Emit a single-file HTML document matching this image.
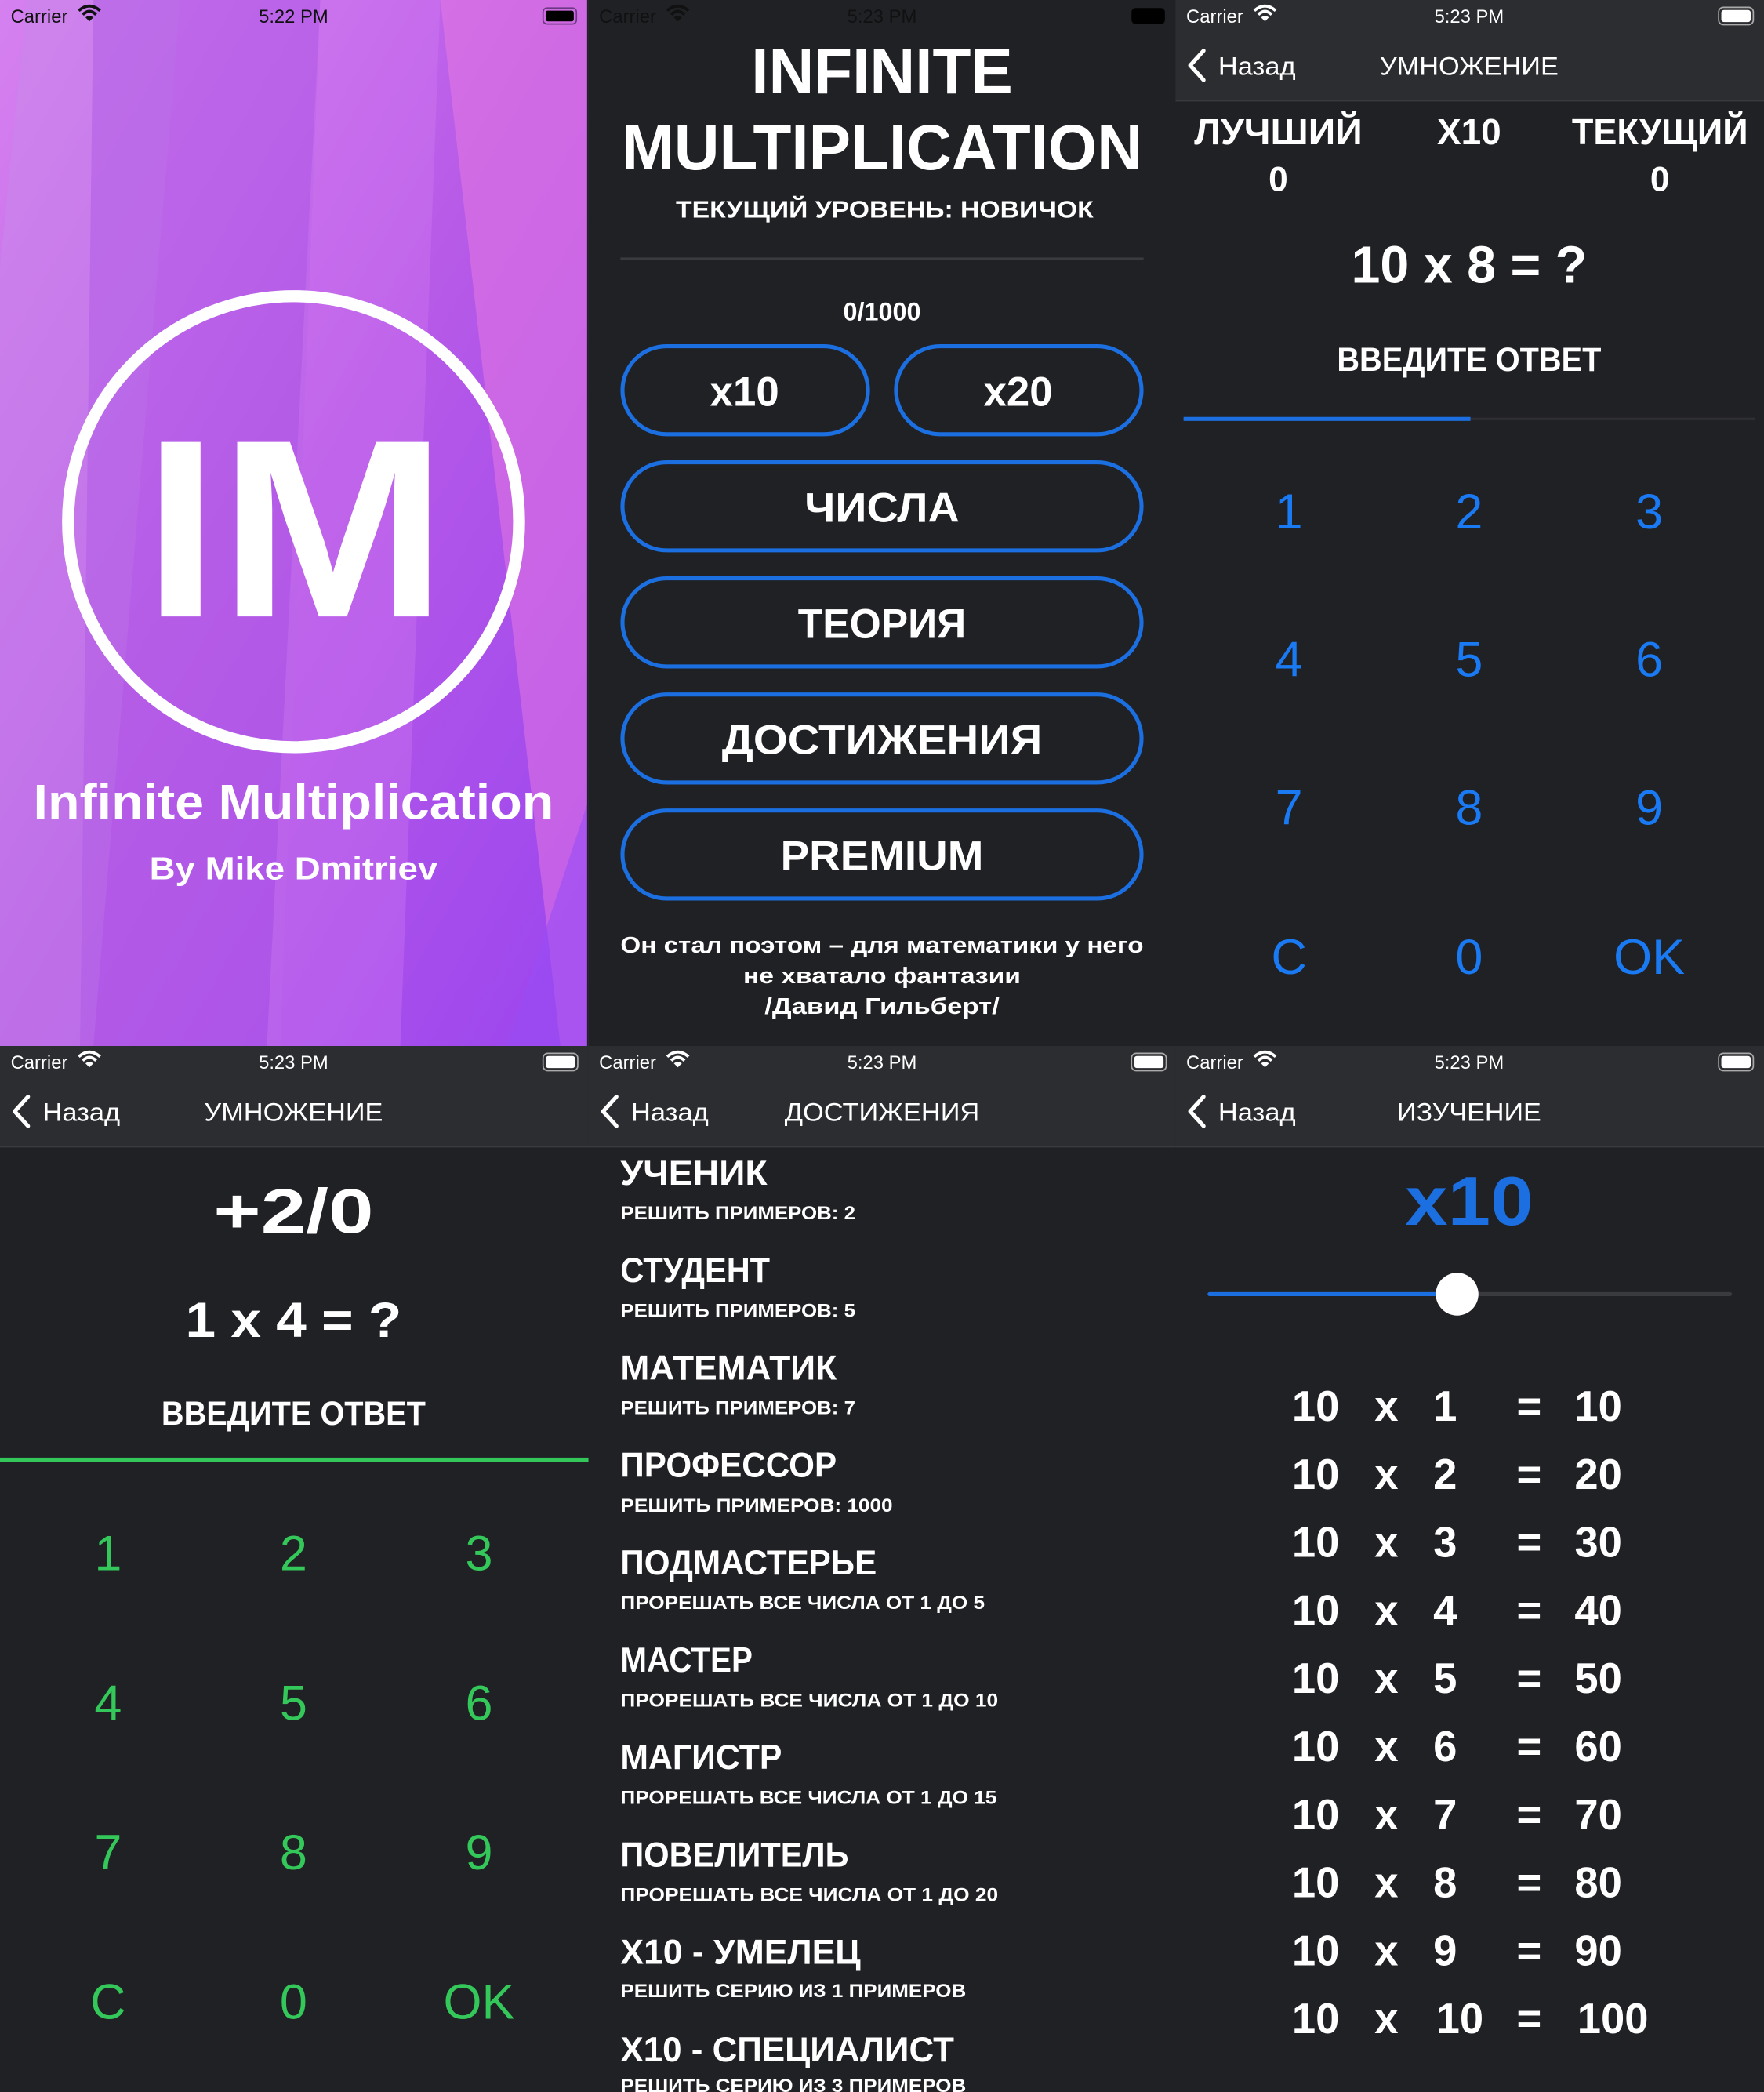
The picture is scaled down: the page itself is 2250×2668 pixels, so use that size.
<!DOCTYPE html>
<html><head><meta charset="utf-8"><style>html,body{margin:0;padding:0;background:#202125;overflow:hidden}svg{display:block}text{font-family:"Liberation Sans",sans-serif}</style></head><body>
<svg width="2250" height="2668" viewBox="0 0 1322 1568" preserveAspectRatio="none" xmlns="http://www.w3.org/2000/svg">
<defs>
<linearGradient id="g1" x1="0" y1="0" x2="1" y2="1"><stop offset="0" stop-color="#d681f0"/><stop offset="0.5" stop-color="#b75ae8"/><stop offset="1" stop-color="#9b45ee"/></linearGradient>
<g id="wifi"><path d="M0 -4 Q8 -11 16 -4" stroke="currentColor" stroke-width="2.2" fill="none"/><path d="M3 -1 Q8 -6 13 -1" stroke="currentColor" stroke-width="2.2" fill="none"/><path d="M8 4 L5 1 Q8 -1 11 1 Z" fill="currentColor"/></g>
<g id="back"><path d="M12 -11 L2 0 L12 11" stroke="#fff" stroke-width="3" fill="none" stroke-linecap="round" stroke-linejoin="round"/></g>
</defs>
<rect width="1322" height="1568" fill="#202125"/>
<!-- Panel 1 -->
<rect x="0" y="0" width="441" height="784" fill="url(#g1)"/>
<polygon points="20,0 135,0 70,784 0,784 0,200" fill="#c88ae8" opacity="0.45"/>
<polygon points="70,0 240,0 210,784 60,784" fill="#b05ae6" opacity="0.5"/>
<polygon points="330,0 441,0 441,784 420,784" fill="#f07ee0" opacity="0.45"/>
<polygon points="240,0 330,0 300,784 200,784" fill="#d880f2" opacity="0.3"/>
<polygon points="441,600 441,784 380,784" fill="#9a4cf5" opacity="0.6"/>
<text x="8" y="17" font-size="14" fill="#111">Carrier</text><use href="#wifi" x="59" y="12" style="color:#111"/>
<text x="220" y="17" font-size="14" fill="#111" text-anchor="middle">5:22 PM</text>
<rect x="407" y="6" width="25" height="12" rx="3" fill="none" stroke="#6a3a80" stroke-width="1"/><rect x="409" y="8" width="21" height="8" rx="1.5" fill="#000"/>
<circle cx="220" cy="391" r="169" fill="none" stroke="#fff" stroke-width="9"/>
<text x="221" y="462" font-size="190" font-weight="bold" fill="#fff" text-anchor="middle" textLength="228" lengthAdjust="spacingAndGlyphs">IM</text>
<text x="220" y="614" font-size="37" font-weight="bold" fill="#fff" text-anchor="middle" textLength="390" lengthAdjust="spacingAndGlyphs">Infinite Multiplication</text>
<text x="220" y="659" font-size="24" font-weight="bold" fill="#fff" text-anchor="middle" textLength="216" lengthAdjust="spacingAndGlyphs">By Mike Dmitriev</text>
<!-- Panel 2 -->
<text x="449" y="17" font-size="14" fill="#111">Carrier</text><use href="#wifi" x="500" y="12" style="color:#111"/>
<text x="661" y="17" font-size="14" fill="#111" text-anchor="middle">5:23 PM</text>
<rect x="848" y="6" width="25" height="12" rx="3" fill="#000"/>
<text x="661" y="70" font-size="48" font-weight="bold" fill="#fff" text-anchor="middle" textLength="196" lengthAdjust="spacingAndGlyphs">INFINITE</text>
<text x="661" y="127" font-size="48" font-weight="bold" fill="#fff" text-anchor="middle" textLength="390" lengthAdjust="spacingAndGlyphs">MULTIPLICATION</text>
<text x="663" y="163" font-size="18" font-weight="bold" fill="#fff" text-anchor="middle" textLength="313" lengthAdjust="spacingAndGlyphs">ТЕКУЩИЙ УРОВЕНЬ: НОВИЧОК</text>
<rect x="465" y="193" width="392" height="2" fill="#3a3b3f"/>
<text x="661" y="240" font-size="19" font-weight="bold" fill="#fff" text-anchor="middle">0/1000</text>
<g fill="none" stroke="#1b6fe0" stroke-width="3">
<rect x="466.5" y="259.5" width="184" height="66" rx="33"/><rect x="671.5" y="259.5" width="184" height="66" rx="33"/>
<rect x="466.5" y="346.5" width="389" height="66" rx="33"/><rect x="466.5" y="433.5" width="389" height="66" rx="33"/>
<rect x="466.5" y="520.5" width="389" height="66" rx="33"/><rect x="466.5" y="607.5" width="389" height="66" rx="33"/>
</g>
<g font-size="31" font-weight="bold" fill="#fff" text-anchor="middle">
<text x="558" y="304">x10</text><text x="763" y="304">x20</text>
<text x="661" y="391" textLength="116" lengthAdjust="spacingAndGlyphs">ЧИСЛА</text>
<text x="661" y="478" textLength="126" lengthAdjust="spacingAndGlyphs">ТЕОРИЯ</text>
<text x="661" y="565" textLength="240" lengthAdjust="spacingAndGlyphs">ДОСТИЖЕНИЯ</text>
<text x="661" y="652" textLength="152" lengthAdjust="spacingAndGlyphs">PREMIUM</text>
</g>
<g font-size="17" font-weight="bold" fill="#fff" text-anchor="middle">
<text x="661" y="714" textLength="392" lengthAdjust="spacingAndGlyphs">Он стал поэтом – для математики у него</text>
<text x="661" y="737" textLength="208" lengthAdjust="spacingAndGlyphs">не хватало фантазии</text>
<text x="661" y="760" textLength="176" lengthAdjust="spacingAndGlyphs">/Давид Гильберт/</text>
</g>
<!-- nav bars -->
<rect x="881" y="0" width="441" height="76" fill="#2c2d30"/><rect x="881" y="75" width="441" height="1" fill="#3a3b3e"/>
<rect x="0" y="784" width="441" height="76" fill="#2c2d30"/><rect x="0" y="859" width="441" height="1" fill="#3a3b3e"/>
<rect x="441" y="784" width="440" height="76" fill="#2c2d30"/><rect x="441" y="859" width="440" height="1" fill="#3a3b3e"/>
<rect x="881" y="784" width="441" height="76" fill="#2c2d30"/><rect x="881" y="859" width="441" height="1" fill="#3a3b3e"/>
<rect x="440" y="0" width="1" height="784" fill="#202125"/>
<g fill="#fff" font-size="14">
<text x="889" y="17">Carrier</text><use href="#wifi" x="940" y="12" style="color:#fff"/><text x="1101" y="17" text-anchor="middle">5:23 PM</text>
<text x="8" y="801">Carrier</text><use href="#wifi" x="59" y="796" style="color:#fff"/><text x="220" y="801" text-anchor="middle">5:23 PM</text>
<text x="449" y="801">Carrier</text><use href="#wifi" x="500" y="796" style="color:#fff"/><text x="661" y="801" text-anchor="middle">5:23 PM</text>
<text x="889" y="801">Carrier</text><use href="#wifi" x="940" y="796" style="color:#fff"/><text x="1101" y="801" text-anchor="middle">5:23 PM</text>
</g>
<g fill="none" stroke="#aaa" stroke-width="1"><rect x="1288" y="5.5" width="26" height="13" rx="3.5"/><rect x="407" y="789.5" width="26" height="13" rx="3.5"/><rect x="848" y="789.5" width="26" height="13" rx="3.5"/><rect x="1288" y="789.5" width="26" height="13" rx="3.5"/></g>
<g fill="#fff"><rect x="1290" y="7.5" width="22" height="9" rx="2"/><rect x="409" y="791.5" width="22" height="9" rx="2"/><rect x="850" y="791.5" width="22" height="9" rx="2"/><rect x="1290" y="791.5" width="22" height="9" rx="2"/></g>
<use href="#back" x="890" y="49"/><use href="#back" x="9" y="833"/><use href="#back" x="450" y="833"/><use href="#back" x="890" y="833"/>
<g fill="#fff" font-size="19">
<text x="913" y="56" textLength="58" lengthAdjust="spacingAndGlyphs">Назад</text><text x="1101" y="56" text-anchor="middle" textLength="134" lengthAdjust="spacingAndGlyphs">УМНОЖЕНИЕ</text>
<text x="32" y="840" textLength="58" lengthAdjust="spacingAndGlyphs">Назад</text><text x="220" y="840" text-anchor="middle" textLength="134" lengthAdjust="spacingAndGlyphs">УМНОЖЕНИЕ</text>
<text x="473" y="840" textLength="58" lengthAdjust="spacingAndGlyphs">Назад</text><text x="661" y="840" text-anchor="middle" textLength="146" lengthAdjust="spacingAndGlyphs">ДОСТИЖЕНИЯ</text>
<text x="913" y="840" textLength="58" lengthAdjust="spacingAndGlyphs">Назад</text><text x="1101" y="840" text-anchor="middle" textLength="108" lengthAdjust="spacingAndGlyphs">ИЗУЧЕНИЕ</text>
</g>
<!-- Panel 3 -->
<g fill="#fff" font-weight="bold" text-anchor="middle">
<text x="958" y="108" font-size="27" textLength="126" lengthAdjust="spacingAndGlyphs">ЛУЧШИЙ</text>
<text x="1101" y="108" font-size="27">X10</text>
<text x="1244" y="108" font-size="27" textLength="132" lengthAdjust="spacingAndGlyphs">ТЕКУЩИЙ</text>
<text x="958" y="143" font-size="26">0</text><text x="1244" y="143" font-size="26">0</text>
<text x="1101" y="212" font-size="39">10 x 8 = ?</text>
<text x="1101" y="278" font-size="25" textLength="198" lengthAdjust="spacingAndGlyphs">ВВЕДИТЕ ОТВЕТ</text>
</g>
<rect x="887" y="313" width="428" height="2" fill="#2e2f33"/><rect x="887" y="312.5" width="215" height="3" fill="#1b6fe0"/>
<g fill="#1a7af3" font-size="37" text-anchor="middle">
<text x="966" y="396">1</text><text x="1101" y="396">2</text><text x="1236" y="396">3</text>
<text x="966" y="507">4</text><text x="1101" y="507">5</text><text x="1236" y="507">6</text>
<text x="966" y="618">7</text><text x="1101" y="618">8</text><text x="1236" y="618">9</text>
<text x="966" y="730">C</text><text x="1101" y="730">0</text><text x="1236" y="730">OK</text>
</g>
<!-- Panel 4 -->
<g fill="#fff" font-weight="bold" text-anchor="middle">
<text x="220" y="924" font-size="47" textLength="120" lengthAdjust="spacingAndGlyphs">+2/0</text>
<text x="220" y="1002" font-size="37" textLength="162" lengthAdjust="spacingAndGlyphs">1 x 4 = ?</text>
<text x="220" y="1068" font-size="25" textLength="198" lengthAdjust="spacingAndGlyphs">ВВЕДИТЕ ОТВЕТ</text>
</g>
<rect x="0" y="1092.5" width="441" height="3" fill="#34c759"/>
<g fill="#34c759" font-size="37" text-anchor="middle">
<text x="81" y="1177">1</text><text x="220" y="1177">2</text><text x="359" y="1177">3</text>
<text x="81" y="1289">4</text><text x="220" y="1289">5</text><text x="359" y="1289">6</text>
<text x="81" y="1401">7</text><text x="220" y="1401">8</text><text x="359" y="1401">9</text>
<text x="81" y="1513">C</text><text x="220" y="1513">0</text><text x="359" y="1513">OK</text>
</g>
<!-- Panel 5 -->
<g fill="#fff" font-weight="bold">
<text x="465" y="888" font-size="26" textLength="110" lengthAdjust="spacingAndGlyphs">УЧЕНИК</text><text x="465" y="914" font-size="14" textLength="176" lengthAdjust="spacingAndGlyphs">РЕШИТЬ ПРИМЕРОВ: 2</text>
<text x="465" y="961" font-size="26" textLength="112" lengthAdjust="spacingAndGlyphs">СТУДЕНТ</text><text x="465" y="987" font-size="14" textLength="176" lengthAdjust="spacingAndGlyphs">РЕШИТЬ ПРИМЕРОВ: 5</text>
<text x="465" y="1034" font-size="26" textLength="162" lengthAdjust="spacingAndGlyphs">МАТЕМАТИК</text><text x="465" y="1060" font-size="14" textLength="176" lengthAdjust="spacingAndGlyphs">РЕШИТЬ ПРИМЕРОВ: 7</text>
<text x="465" y="1107" font-size="26" textLength="162" lengthAdjust="spacingAndGlyphs">ПРОФЕССОР</text><text x="465" y="1133" font-size="14" textLength="204" lengthAdjust="spacingAndGlyphs">РЕШИТЬ ПРИМЕРОВ: 1000</text>
<text x="465" y="1180" font-size="26" textLength="192" lengthAdjust="spacingAndGlyphs">ПОДМАСТЕРЬЕ</text><text x="465" y="1206" font-size="14" textLength="273" lengthAdjust="spacingAndGlyphs">ПРОРЕШАТЬ ВСЕ ЧИСЛА ОТ 1 ДО 5</text>
<text x="465" y="1253" font-size="26" textLength="99" lengthAdjust="spacingAndGlyphs">МАСТЕР</text><text x="465" y="1279" font-size="14" textLength="283" lengthAdjust="spacingAndGlyphs">ПРОРЕШАТЬ ВСЕ ЧИСЛА ОТ 1 ДО 10</text>
<text x="465" y="1326" font-size="26" textLength="121" lengthAdjust="spacingAndGlyphs">МАГИСТР</text><text x="465" y="1352" font-size="14" textLength="282" lengthAdjust="spacingAndGlyphs">ПРОРЕШАТЬ ВСЕ ЧИСЛА ОТ 1 ДО 15</text>
<text x="465" y="1399" font-size="26" textLength="171" lengthAdjust="spacingAndGlyphs">ПОВЕЛИТЕЛЬ</text><text x="465" y="1425" font-size="14" textLength="283" lengthAdjust="spacingAndGlyphs">ПРОРЕШАТЬ ВСЕ ЧИСЛА ОТ 1 ДО 20</text>
<text x="465" y="1472" font-size="26" textLength="180" lengthAdjust="spacingAndGlyphs">X10 - УМЕЛЕЦ</text><text x="465" y="1497" font-size="14" textLength="259" lengthAdjust="spacingAndGlyphs">РЕШИТЬ СЕРИЮ ИЗ 1 ПРИМЕРОВ</text>
<text x="465" y="1545" font-size="26" textLength="250" lengthAdjust="spacingAndGlyphs">X10 - СПЕЦИАЛИСТ</text><text x="465" y="1568" font-size="14" textLength="259" lengthAdjust="spacingAndGlyphs">РЕШИТЬ СЕРИЮ ИЗ 3 ПРИМЕРОВ</text>
</g>
<!-- Panel 6 -->
<text x="1101" y="918" font-size="52" font-weight="bold" fill="#1b6fe0" text-anchor="middle" textLength="96" lengthAdjust="spacingAndGlyphs">x10</text>
<rect x="905" y="968.5" width="393" height="3" rx="1.5" fill="#3a3b3f"/><rect x="905" y="968.5" width="187" height="3" rx="1.5" fill="#1b6fe0"/>
<circle cx="1092" cy="970" r="16" fill="#fff"/>
<g fill="#fff" font-weight="bold" font-size="32">
<text x="986" y="1065" text-anchor="middle">10</text><text x="1039" y="1065" text-anchor="middle">x</text><text x="1083" y="1065" text-anchor="middle">1</text><text x="1146" y="1065" text-anchor="middle">=</text><text x="1180" y="1065">10</text>
<text x="986" y="1116" text-anchor="middle">10</text><text x="1039" y="1116" text-anchor="middle">x</text><text x="1083" y="1116" text-anchor="middle">2</text><text x="1146" y="1116" text-anchor="middle">=</text><text x="1180" y="1116">20</text>
<text x="986" y="1167" text-anchor="middle">10</text><text x="1039" y="1167" text-anchor="middle">x</text><text x="1083" y="1167" text-anchor="middle">3</text><text x="1146" y="1167" text-anchor="middle">=</text><text x="1180" y="1167">30</text>
<text x="986" y="1218" text-anchor="middle">10</text><text x="1039" y="1218" text-anchor="middle">x</text><text x="1083" y="1218" text-anchor="middle">4</text><text x="1146" y="1218" text-anchor="middle">=</text><text x="1180" y="1218">40</text>
<text x="986" y="1269" text-anchor="middle">10</text><text x="1039" y="1269" text-anchor="middle">x</text><text x="1083" y="1269" text-anchor="middle">5</text><text x="1146" y="1269" text-anchor="middle">=</text><text x="1180" y="1269">50</text>
<text x="986" y="1320" text-anchor="middle">10</text><text x="1039" y="1320" text-anchor="middle">x</text><text x="1083" y="1320" text-anchor="middle">6</text><text x="1146" y="1320" text-anchor="middle">=</text><text x="1180" y="1320">60</text>
<text x="986" y="1371" text-anchor="middle">10</text><text x="1039" y="1371" text-anchor="middle">x</text><text x="1083" y="1371" text-anchor="middle">7</text><text x="1146" y="1371" text-anchor="middle">=</text><text x="1180" y="1371">70</text>
<text x="986" y="1422" text-anchor="middle">10</text><text x="1039" y="1422" text-anchor="middle">x</text><text x="1083" y="1422" text-anchor="middle">8</text><text x="1146" y="1422" text-anchor="middle">=</text><text x="1180" y="1422">80</text>
<text x="986" y="1473" text-anchor="middle">10</text><text x="1039" y="1473" text-anchor="middle">x</text><text x="1083" y="1473" text-anchor="middle">9</text><text x="1146" y="1473" text-anchor="middle">=</text><text x="1180" y="1473">90</text>
<text x="986" y="1524" text-anchor="middle">10</text><text x="1039" y="1524" text-anchor="middle">x</text><text x="1094" y="1524" text-anchor="middle">10</text><text x="1146" y="1524" text-anchor="middle">=</text><text x="1182" y="1524">100</text>
</g>
</svg>
</body></html>
